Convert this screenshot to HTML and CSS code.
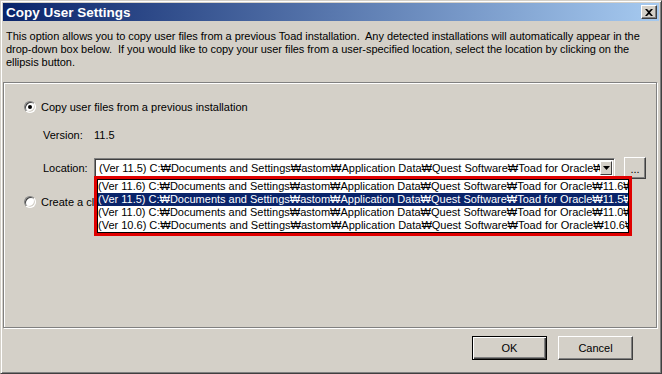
FILE: index.html
```html
<!DOCTYPE html>
<html lang="ko">
<head>
	<meta charset="UTF-8">
	<title>Copy User Settings</title>
	<link rel="stylesheet" href="styles.css">
</head>
<body>
	<div class="window">
		<div class="titlebar">
			<span class="title">Copy User Settings</span>
			<div class="close-btn">
				<svg width="8" height="7" viewBox="0 0 8 7"><path d="M0 0h2l2 2 2-2h2L5 3.5 8 7H6L4 5 2 7H0l3-3.5z" fill="#000"/></svg>
			</div>
		</div>

		<p class="intro">This option allows you to copy user files from a previous Toad installation.&nbsp; Any detected installations will automatically appear in the drop-down box below.&nbsp; If you would like to copy your user files from a user-specified location, select the location by clicking on the ellipsis button.</p>

		<div class="group">
			<label class="radio-row">
				<span class="radio checked"></span>
				<span>Copy user files from a previous installation</span>
			</label>

			<div class="field-row version-row">
				<span class="field-label">Version:</span>
				<span>11.5</span>
			</div>

			<div class="field-row location-row">
				<span class="field-label">Location:</span>
				<div class="combo">
					<div class="combo-text">(Ver 11.5) C:₩Documents and Settings₩astom₩Application Data₩Quest Software₩Toad for Oracle₩11.5₩</div>
					<div class="combo-btn">
						<svg width="7" height="4" viewBox="0 0 7 4"><path d="M0 0h7L3.5 4z" fill="#000"/></svg>
					</div>
					<div class="dropdown">
						<div class="dropdown-list">
							<div class="option">(Ver 11.6) C:₩Documents and Settings₩astom₩Application Data₩Quest Software₩Toad for Oracle₩11.6₩</div>
							<div class="option selected">(Ver 11.5) C:₩Documents and Settings₩astom₩Application Data₩Quest Software₩Toad for Oracle₩11.5₩</div>
							<div class="option">(Ver 11.0) C:₩Documents and Settings₩astom₩Application Data₩Quest Software₩Toad for Oracle₩11.0₩</div>
							<div class="option">(Ver 10.6) C:₩Documents and Settings₩astom₩Application Data₩Quest Software₩Toad for Oracle₩10.6₩</div>
						</div>
					</div>
				</div>
				<div class="btn ellipsis">...</div>
			</div>

			<label class="radio-row second">
				<span class="radio"></span>
				<span>Create a clean set of user files</span>
			</label>
		</div>

		<div class="buttons">
			<div class="btn push default">OK</div>
			<div class="btn push">Cancel</div>
		</div>
	</div>
</body>
</html>
```

FILE: styles.css
```css
* {
	box-sizing: border-box;
}
body {
	margin: 0;
	background: #d4d0c8;
	font-family: "Liberation Sans", "DejaVu Sans", sans-serif;
	font-size: 11px;
	color: #000;
}
.window {
	width: 662px;
	height: 374px;
	background: #d4d0c8;
	border: 1px solid;
	border-color: #d4d0c8 #404040 #404040 #d4d0c8;
	box-shadow: inset 1px 1px 0 #fff, inset -1px -1px 0 #808080;
	padding: 2px;
	display: flex;
	flex-direction: column;
}
.titlebar {
	height: 18px;
	background: linear-gradient(to right, #0a246a, #a6caf0);
	display: flex;
	align-items: center;
	justify-content: space-between;
	padding: 0 2px 0 3px;
}
.title {
	color: #fff;
	font-weight: bold;
	font-size: 13.5px;
}
.close-btn {
	width: 16px;
	height: 14px;
	background: #d4d0c8;
	border: 1px solid;
	border-color: #fff #404040 #404040 #fff;
	box-shadow: inset -1px -1px 0 #808080;
	display: flex;
	align-items: center;
	justify-content: center;
}
.intro {
	margin: 9px 4px 0 3px;
	line-height: 13px;
	letter-spacing: -0.05px;
}
.group {
	margin: 13px 2px 0 0;
	height: 246px;
	border: 1px solid #808080;
	box-shadow: inset 1px 1px 0 #fff, 1px 1px 0 #fff;
	padding: 17px 0 0 20px;
}
.radio-row {
	display: flex;
	align-items: center;
	gap: 5px;
	height: 14px;
}
.radio {
	width: 12px;
	height: 12px;
	border-radius: 50%;
	background: #fff;
	border: 1px solid;
	border-color: #808080 #fff #fff #808080;
	box-shadow: inset 1px 1px 0 #404040, inset -1px -1px 0 #d4d0c8;
	position: relative;
}
.radio.checked::after {
	content: "";
	position: absolute;
	left: 3px;
	top: 3px;
	width: 4px;
	height: 4px;
	border-radius: 50%;
	background: #000;
}
.field-row {
	display: flex;
	align-items: center;
	padding-left: 19px;
}
.field-label {
	width: 51px;
}
.version-row {
	margin-top: 14px;
	height: 14px;
}
.location-row {
	margin-top: 15px;
	height: 22px;
}
.combo {
	position: relative;
	width: 521px;
	height: 20px;
	background: #fff;
	border: 1px solid;
	border-color: #808080 #fff #fff #808080;
	box-shadow: inset 1px 1px 0 #404040, inset -1px -1px 0 #d4d0c8;
	display: flex;
	align-items: center;
	padding: 2px;
}
.combo-text {
	flex: 1;
	overflow: hidden;
	white-space: nowrap;
	padding-left: 2px;
}
.combo-btn {
	width: 12px;
	height: 14px;
	background: #d4d0c8;
	border: 1px solid;
	border-color: #fff #404040 #404040 #fff;
	display: flex;
	align-items: center;
	justify-content: center;
}
.dropdown {
	position: absolute;
	left: -1px;
	top: 17px;
	width: 538px;
	border: 3px solid #e00000;
}
.dropdown-list {
	background: #fff;
	border: 1px solid #000;
}
.option {
	height: 13px;
	line-height: 13px;
	white-space: nowrap;
	overflow: hidden;
}
.option.selected {
	background: #0a246a;
	color: #fff;
}
.btn {
	background: #d4d0c8;
	border: 1px solid;
	border-color: #fff #404040 #404040 #fff;
	box-shadow: inset -1px -1px 0 #808080;
	display: flex;
	align-items: center;
	justify-content: center;
}
.ellipsis {
	width: 22px;
	height: 22px;
	margin-left: 9px;
	align-items: flex-end;
	padding-bottom: 3px;
}
.radio-row.second {
	margin-top: 16px;
}
.buttons {
	display: flex;
	justify-content: flex-end;
	gap: 11px;
	padding-right: 26px;
	margin-top: 8px;
}
.push {
	width: 75px;
	height: 24px;
}
.push.default {
	border: 1px solid #000;
	box-shadow: inset 1px 1px 0 #fff, inset -1px -1px 0 #404040, inset -2px -2px 0 #808080;
}
```
